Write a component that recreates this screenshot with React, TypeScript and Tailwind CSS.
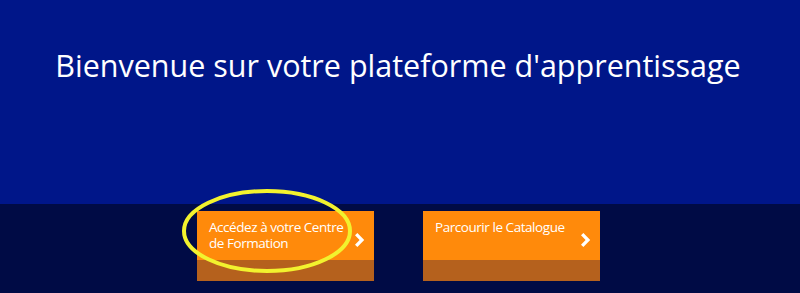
function Chevron() {
  return (
    <svg width="10" height="14" viewBox="0 0 10 14" className="text-white">
      <polygon points="0,2.2 2.4,0 9.2,7 2.4,14 0,11.8 4.6,7" fill="currentColor" />
    </svg>
  );
}

function Tile({ label }: { label: string }) {
  return (
    <a href="#" className="flex w-[177px] flex-col">
      <div className="flex h-[49px] bg-[#ff8a0b]">
        <span className="flex-1 pl-[12px] pt-[8px] text-[13.5px] leading-[16px] tracking-[-0.45px] text-white">
          {label}
        </span>
        <span className="flex w-[24px] shrink-0 items-center pt-[8px] pl-[5px]">
          <Chevron />
        </span>
      </div>
      <div className="h-[21px] bg-[#b5611d]" />
    </a>
  );
}

export default function App() {
  return (
    <div className="relative h-[293px] w-[800px] overflow-hidden font-['Open_Sans',sans-serif]">
      <div className="flex h-[204px] justify-center bg-[#001689] pr-[4px] pt-[43px]">
        <h1 className="text-[30.5px] leading-[44px] text-white">
          Bienvenue sur votre plateforme d'apprentissage
        </h1>
      </div>
      <div className="flex h-[89px] justify-center gap-[49px] bg-[#000b45] pr-[3px] pt-[7px]">
        <Tile label="Accédez à votre Centre de Formation" />
        <Tile label="Parcourir le Catalogue" />
      </div>
      {/* annotation ring */}
      <svg className="absolute left-0 top-0" width="800" height="293">
        <ellipse cx="267" cy="231" rx="83" ry="40" fill="none" stroke="#f2f22e" strokeWidth="4" />
      </svg>
    </div>
  );
}
